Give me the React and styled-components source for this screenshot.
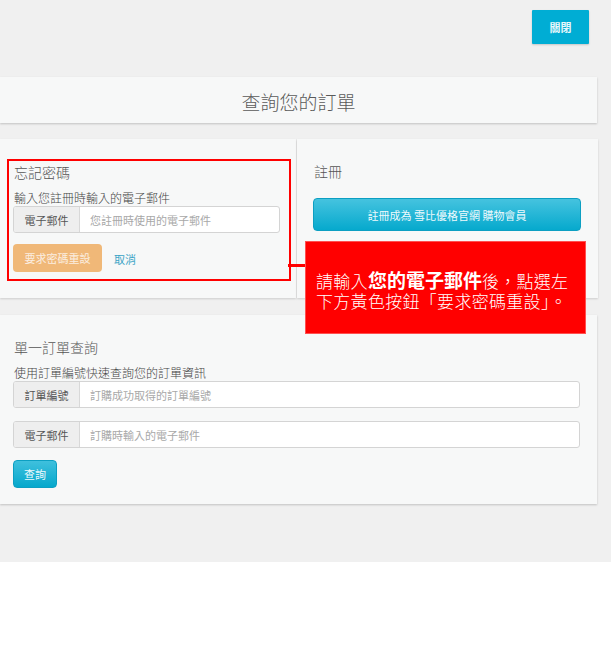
import styled, { createGlobalStyle } from 'styled-components';

const GlobalStyle = createGlobalStyle`
    body {
        margin: 0;
        background: #fff;
        font-family: "Noto Sans CJK TC", "Liberation Sans", sans-serif;
    }
`;

const App = () => {
    return <>
        <GlobalStyle />
        <Page>
            <TopBar>
                <CloseButton>關閉</CloseButton>
            </TopBar>
            <Content>
                <TitlePanel>查詢您的訂單</TitlePanel>
                <Row>
                    <Panel>
                        <Highlight>
                            <Heading>忘記密碼</Heading>
                            <Label>輸入您註冊時輸入的電子郵件</Label>
                            <InputGroup>
                                <Addon>電子郵件</Addon>
                                <Field placeholder="您註冊時使用的電子郵件" />
                            </InputGroup>
                            <Actions>
                                <ResetButton>要求密碼重設</ResetButton>
                                <CancelLink>取消</CancelLink>
                            </Actions>
                        </Highlight>
                    </Panel>
                    <Panel $pad="22px 17px 0 16px">
                        <Heading>註冊</Heading>
                        <RegisterButton>註冊成為 雪比優格官網 購物會員</RegisterButton>
                    </Panel>
                    <Connector />
                    <Callout>
                        <CalloutLine>請輸入<strong>您的電子郵件</strong>後，點選左</CalloutLine>
                        <CalloutLine>下方黃色按鈕「要求密碼重設」。</CalloutLine>
                    </Callout>
                </Row>
                <QueryPanel>
                    <Heading>單一訂單查詢</Heading>
                    <Label>使用訂單編號快速查詢您的訂單資訊</Label>
                    <InputGroup $wide>
                        <Addon>訂單編號</Addon>
                        <Field placeholder="訂購成功取得的訂單編號" />
                    </InputGroup>
                    <InputGroup $wide $gap="13px">
                        <Addon>電子郵件</Addon>
                        <Field placeholder="訂購時輸入的電子郵件" />
                    </InputGroup>
                    <SearchButton>查詢</SearchButton>
                </QueryPanel>
            </Content>
        </Page>
    </>;
};

const Page = styled.div`
    background: #f0f0f0;
    height: 562px;
    padding-top: 10px;
    box-sizing: border-box;
`;

const TopBar = styled.div`
    display: flex;
    justify-content: flex-end;
    padding-right: 22px;
`;

const CloseButton = styled.button`
    width: 57px;
    height: 34px;
    border: none;
    border-radius: 1px;
    background: #00add4;
    color: #e8f8fc;
    font-family: inherit;
    font-size: 11px;
    font-weight: 700;
    box-shadow: 0 1px 2px rgba(0, 0, 0, 0.18);
`;

const Content = styled.div`
    margin: 33px 14px 0 0;
`;

const TitlePanel = styled.div`
    height: 46px;
    background: #f7f8f8;
    box-shadow: 0 1px 2px rgba(0, 0, 0, 0.2);
    display: flex;
    align-items: center;
    justify-content: center;
    font-size: 19px;
    font-weight: 300;
    color: #5a5a5a;
    padding-top: 2px;
    box-sizing: border-box;
`;

const Row = styled.div`
    position: relative;
    margin-top: 16px;
    height: 159px;
    display: grid;
    grid-template-columns: 296px 1fr;
    gap: 1px;
`;

const Panel = styled.div`
    background: #f7f8f8;
    box-shadow: 0 1px 2px rgba(0, 0, 0, 0.15);
    padding: ${(p) => p.$pad || '20px 0 0 7px'};
`;

const Highlight = styled.div`
    width: 284px;
    height: 122px;
    box-sizing: border-box;
    border: 2px solid #ff0000;
    padding: 1px 0 0 4px;
`;

const Heading = styled.div`
    font-size: 14px;
    line-height: 20px;
    font-weight: 300;
    color: #555;
    margin-left: 1px;
`;

const Label = styled.div`
    font-size: 12px;
    line-height: 16px;
    font-weight: 300;
    color: #444;
    margin: 8px 0 0 1px;
`;

const InputGroup = styled.div`
    display: flex;
    width: ${(p) => (p.$wide ? '567px' : '267px')};
    height: 27px;
    margin-top: ${(p) => p.$gap || '0'};
    border: 1px solid #d4d4d4;
    border-radius: 3px;
    box-sizing: border-box;
    overflow: hidden;
    background: #fff;
`;

const Addon = styled.div`
    width: 65px;
    flex: none;
    display: flex;
    align-items: center;
    justify-content: center;
    background: #eee;
    border-right: 1px solid #d8d8d8;
    font-size: 11px;
    color: #555;
`;

const Field = styled.input`
    flex: 1;
    min-width: 0;
    border: none;
    outline: none;
    padding: 0 10px;
    font-family: inherit;
    font-size: 11px;
    color: #555;
    background: transparent;

    &::placeholder {
        color: #a8a8a8;
    }
`;

const Actions = styled.div`
    display: flex;
    align-items: center;
    gap: 12px;
    margin-top: 11px;
`;

const ResetButton = styled.button`
    width: 89px;
    height: 28px;
    border: none;
    border-radius: 4px;
    background: #f0b878;
    color: #fbeee0;
    font-family: inherit;
    font-size: 11px;
    padding: 0;
`;

const CancelLink = styled.a`
    font-size: 11px;
    color: #3aa3c6;
    margin-top: 1px;
`;

const RegisterButton = styled.button`
    display: block;
    width: 268px;
    height: 33px;
    margin-top: 17px;
    border: 1px solid #0c9fc2;
    border-radius: 4px;
    background: linear-gradient(#45c3df, #06a9cd);
    color: #eefafd;
    font-family: inherit;
    font-size: 11px;
    padding: 0;
`;

const Connector = styled.div`
    position: absolute;
    left: 288px;
    top: 125px;
    width: 17px;
    height: 3px;
    background: #ff0000;
`;

const Callout = styled.div`
    position: absolute;
    left: 305px;
    top: 102px;
    width: 281px;
    height: 93px;
    box-sizing: border-box;
    background: #ff0000;
    border: 1px solid #ff5050;
    padding: 27px 0 0 10px;
    display: flex;
    flex-direction: column;
    color: #fff;
    white-space: nowrap;
`;

const CalloutLine = styled.div`
    height: 21px;
    font-size: 17px;
    line-height: 21px;
    font-weight: 300;
    letter-spacing: 0.3px;

    strong {
        font-size: 19px;
        font-weight: 700;
        letter-spacing: 0;
    }
`;

const QueryPanel = styled.div`
    margin-top: 17px;
    height: 189px;
    box-sizing: border-box;
    background: #f7f8f8;
    box-shadow: 0 1px 2px rgba(0, 0, 0, 0.2);
    padding: 22px 0 0 13px;
`;

const SearchButton = styled.button`
    display: block;
    width: 44px;
    height: 28px;
    margin-top: 12px;
    border: 1px solid #0c9fc2;
    border-radius: 4px;
    background: linear-gradient(#3fc0dd, #06a8cc);
    color: #eefafd;
    font-family: inherit;
    font-size: 11px;
    padding: 0;
`;

export default App;
